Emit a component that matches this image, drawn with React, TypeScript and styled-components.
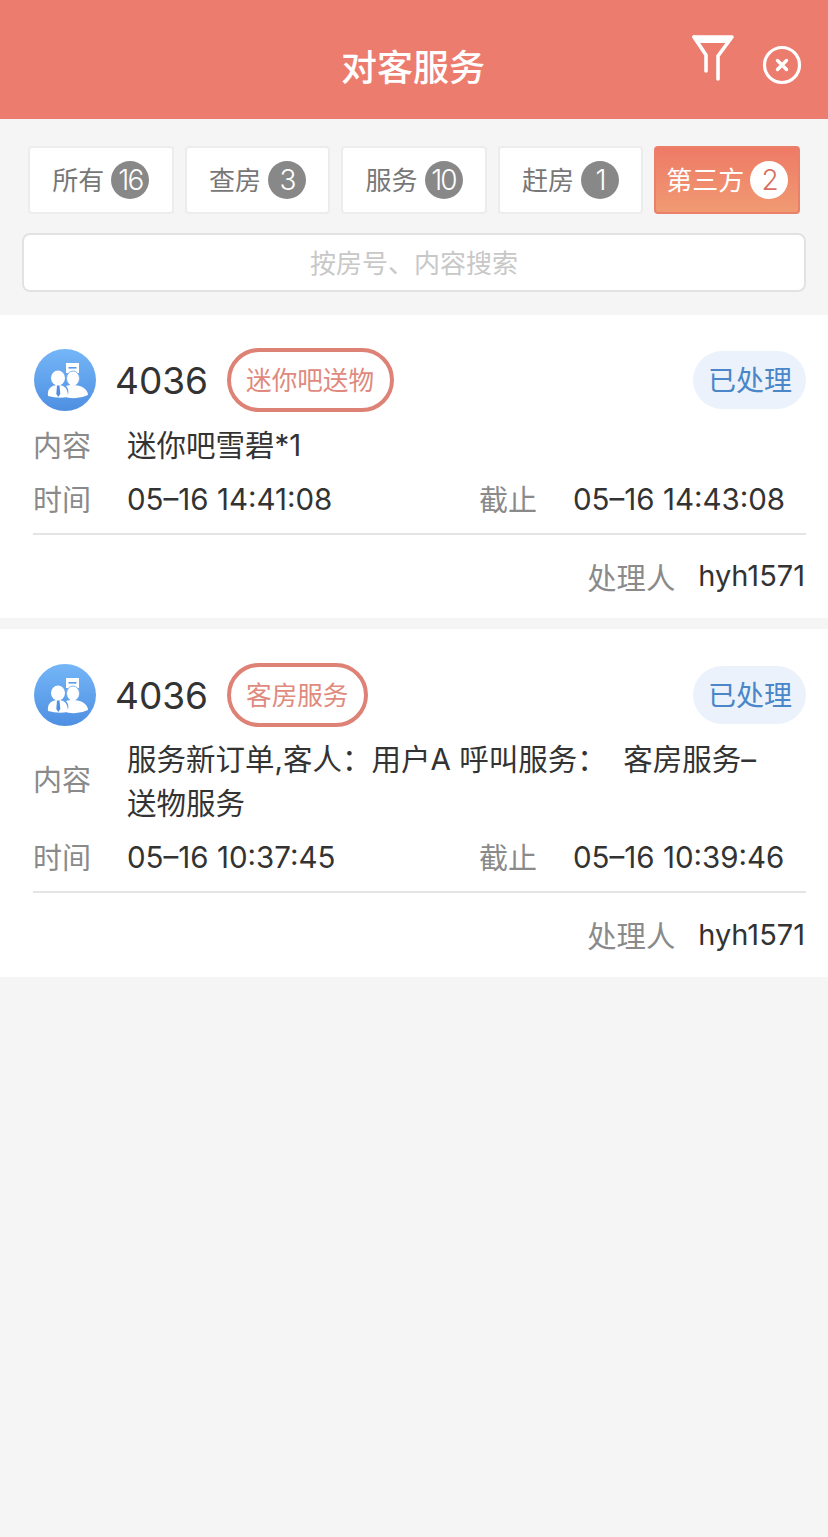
import React from 'react';
import styled, { createGlobalStyle } from 'styled-components';

const GlobalStyle = createGlobalStyle`
  html, body {
    margin: 0;
    padding: 0;
    background: #f5f5f5;
  }
  * {
    box-sizing: border-box;
  }
`;

const fontStack = `Inter, "Noto Sans CJK SC", sans-serif`;

const tabs = [
    { label: '所有', count: 16 },
    { label: '查房', count: 3 },
    { label: '服务', count: 10 },
    { label: '赶房', count: 1 },
    { label: '第三方', count: 2, active: true }
];

const orders = [
    {
        room: '4036',
        tag: '迷你吧送物',
        content: '迷你吧雪碧*1',
        time: '05–16 14:41:08',
        deadline: '05–16 14:43:08'
    },
    {
        room: '4036',
        tag: '客房服务',
        content: '服务新订单,客人：用户A 呼叫服务：\u00a0 客房服务–送物服务',
        time: '05–16 10:37:45',
        deadline: '05–16 10:39:46',
        tall: true
    }
];

const FilterIcon = () => (
    <svg width="44" height="48" viewBox="0 0 44 48" fill="none">
        <path d="M3 3 H41 L27 22 V45" stroke="#fff" strokeWidth="3.6" strokeLinejoin="round" strokeLinecap="round" />
        <path d="M3 3 L15 21 V37" stroke="#fff" strokeWidth="3.6" strokeLinejoin="round" strokeLinecap="round" />
        <path d="M5 4 H39 L35.500 9 H8.500 Z" fill="#fff" />
    </svg>
);

const CloseIcon = () => (
    <svg width="40" height="40" viewBox="0 0 40 40" fill="none">
        <circle cx="20" cy="20" r="17.5" stroke="#fff" strokeWidth="3.2" />
        <path d="M15.5 15.5 L24.5 24.5 M24.5 15.5 L15.5 24.5" stroke="#fff" strokeWidth="3.4" strokeLinecap="round" />
    </svg>
);

const Avatar = () => (
    <AvatarIcon width="62" height="62" viewBox="0 0 62 62">
        <defs>
            <linearGradient id="avatarBg" x1="0" y1="0" x2="0" y2="1">
                <stop offset="0" stopColor="#74b6f7" />
                <stop offset="1" stopColor="#4f8fe2" />
            </linearGradient>
        </defs>
        <circle cx="31" cy="31" r="31" fill="url(#avatarBg)" />
        <path d="M32 14 H45 V24 H38 L36 26 V24 H32 Z" fill="#fff" />
        <rect x="34.500" y="18" width="8" height="1.600" fill="#5b9ae6" />
        <ellipse cx="24" cy="29" rx="7" ry="7.500" fill="#fff" />
        <ellipse cx="39" cy="29.500" rx="6.500" ry="7.500" fill="#fff" stroke="#64a4ee" strokeWidth="0.800" />
        <path d="M14 47 C13 40 17 36 24 36 C31 36 34 40 34 48 Q24 50 14 47 Z" fill="#fff" />
        <path d="M32 37 C34 36 36 36 39 36 C47 36 54 40 54 46 Q44 51 33 48.500 C35 44 35 40 32 37 Z" fill="#fff" />
        <path d="M23 36.500 H25.500 L26.300 45 L24.300 48 L22.300 45 Z" fill="#4f8fe2" />
    </AvatarIcon>
);

export default function App() {
    return (
        <Page>
            <GlobalStyle />
            <Header>
                <Title>对客服务</Title>
                <FilterButton><FilterIcon /></FilterButton>
                <CloseButton><CloseIcon /></CloseButton>
            </Header>

            <Toolbar>
                <TabRow>
                    {tabs.map(tab => (
                        <Tab key={tab.label} $active={tab.active}>
                            <TabLabel>{tab.label}</TabLabel>
                            <Badge $active={tab.active}>{tab.count}</Badge>
                        </Tab>
                    ))}
                </TabRow>
                <SearchBox>按房号、内容搜索</SearchBox>
            </Toolbar>

            {orders.map((order, i) => (
                <Card key={i}>
                    <CardHead $tall={order.tall}>
                        <Avatar />
                        <Room>{order.room}</Room>
                        <Tag>{order.tag}</Tag>
                        <Status>已处理</Status>
                    </CardHead>
                    <ContentRow>
                        <Label $centered={order.tall}>内容</Label>
                        <Value>{order.content}</Value>
                    </ContentRow>
                    <TimeRow>
                        <TimeCell>
                            <Label>时间</Label>
                            <Value>{order.time}</Value>
                        </TimeCell>
                        <TimeCell>
                            <Label>截止</Label>
                            <Value>{order.deadline}</Value>
                        </TimeCell>
                    </TimeRow>
                    <Footer $tall={order.tall}>
                        <FooterLabel>处理人</FooterLabel>
                        <FooterValue>hyh1571</FooterValue>
                    </Footer>
                </Card>
            ))}
        </Page>
    );
}

const Page = styled.div`
   min-height: 1537px;
   background: #f5f5f5;
   font-family: ${fontStack};
`;

const Header = styled.header`
   position: relative;
   height: 119px;
   display: flex;
   align-items: center;
   justify-content: center;
   padding-top: 11px;
   background: #ec7d6e;
`;

const Title = styled.div`
   margin-right: 2px;
   font-size: 36px;
   font-weight: 500;
   color: #fff;
`;

const FilterButton = styled.div`
   position: absolute;
   left: 691px;
   top: 34px;
   display: flex;
`;

const CloseButton = styled.div`
   position: absolute;
   left: 762px;
   top: 45px;
   display: flex;
`;

const Toolbar = styled.div`
   padding: 27px 22px 23px;
`;

const TabRow = styled.div`
   display: grid;
   grid-template-columns: repeat(5, 1fr);
   gap: 11px;
   margin: 0 6px 19px;
`;

const Tab = styled.div<{ $active?: boolean }>`
   height: 68px;
   display: flex;
   align-items: center;
   justify-content: center;
   gap: ${({ $active }) => ($active ? '6px' : '7px')};
   border-radius: 4px;
   font-size: 26px;
   color: ${({ $active }) => ($active ? '#fff' : '#777')};
   background: ${({ $active }) => ($active ? 'linear-gradient(#ee7a66, #f09a72)' : '#fff')};
   border: 2px solid ${({ $active }) => ($active ? '#ea7f6a' : '#ececec')};
`;

const TabLabel = styled.span`
   margin-top: -4px;
`;

const Badge = styled.span<{ $active?: boolean }>`
   width: 38px;
   height: 38px;
   display: flex;
   align-items: center;
   justify-content: center;
   border-radius: 50%;
   font-size: 28px;
   font-weight: 300;
   letter-spacing: -2px;
   color: ${({ $active }) => ($active ? '#d9705f' : '#fff')};
   background: ${({ $active }) => ($active ? '#fff' : '#888')};
`;

const SearchBox = styled.div`
   height: 59px;
   display: flex;
   align-items: center;
   justify-content: center;
   padding-bottom: 2px;
   border-radius: 8px;
   border: 2px solid #e2e2e2;
   background: #fff;
   font-size: 26px;
   color: #c8c8c8;
`;

const Card = styled.section`
   padding: 33px 22px 0 33px;
   margin-bottom: 11px;
   background: #fff;
`;

const CardHead = styled.div<{ $tall?: boolean }>`
   height: 64px;
   display: flex;
   align-items: center;
   margin-top: ${({ $tall }) => ($tall ? '1px' : '0')};
   margin-bottom: ${({ $tall }) => ($tall ? '10px' : '11px')};
`;

const AvatarIcon = styled.svg`
   flex: none;
   margin-left: 1px;
`;

const Room = styled.div`
   margin-left: 19px;
   font-size: 37px;
   color: #333;
`;

const Tag = styled.div`
   height: 64px;
   margin-left: 19px;
   padding: 0 16px 3px 15px;
   display: flex;
   align-items: center;
   border: 4px solid #de8276;
   border-radius: 32px;
   font-size: 25.6px;
   color: #e08a7e;
`;

const Status = styled.div`
   height: 58px;
   margin-left: auto;
   padding: 0 14px 2px 15px;
   display: flex;
   align-items: center;
   border-radius: 29px;
   background: #ecf2fb;
   font-size: 28px;
   color: #4a86c8;
`;

const ContentRow = styled.div`
   display: flex;
   align-items: center;
   margin-bottom: 10px;
   padding-right: 36px;
`;

const Label = styled.div<{ $centered?: boolean }>`
   flex: none;
   width: 94px;
   font-size: 29px;
   line-height: ${({ $centered }) => ($centered ? '44px' : '48px')};
   margin-bottom: ${({ $centered }) => ($centered ? '0' : '-4px')};
   color: #8a8a8a;
`;

const Value = styled.div`
   font-size: 29.5px;
   line-height: 44px;
   color: #333;
`;

const TimeRow = styled.div`
   display: grid;
   grid-template-columns: 446px 1fr;
   padding-bottom: 12px;
   border-bottom: 2px solid #e4e4e4;
`;

const TimeCell = styled.div`
   display: flex;
`;

const Footer = styled.div<{ $tall?: boolean }>`
   height: ${({ $tall }) => ($tall ? '84px' : '83px')};
   padding: 0 1px 2px 0;
   display: flex;
   align-items: center;
   justify-content: flex-end;
   gap: 23px;
`;

const FooterLabel = styled.div`
   font-size: 29.3px;
   color: #8a8a8a;
`;

const FooterValue = styled.div`
   font-size: 29px;
   color: #333;
`;
